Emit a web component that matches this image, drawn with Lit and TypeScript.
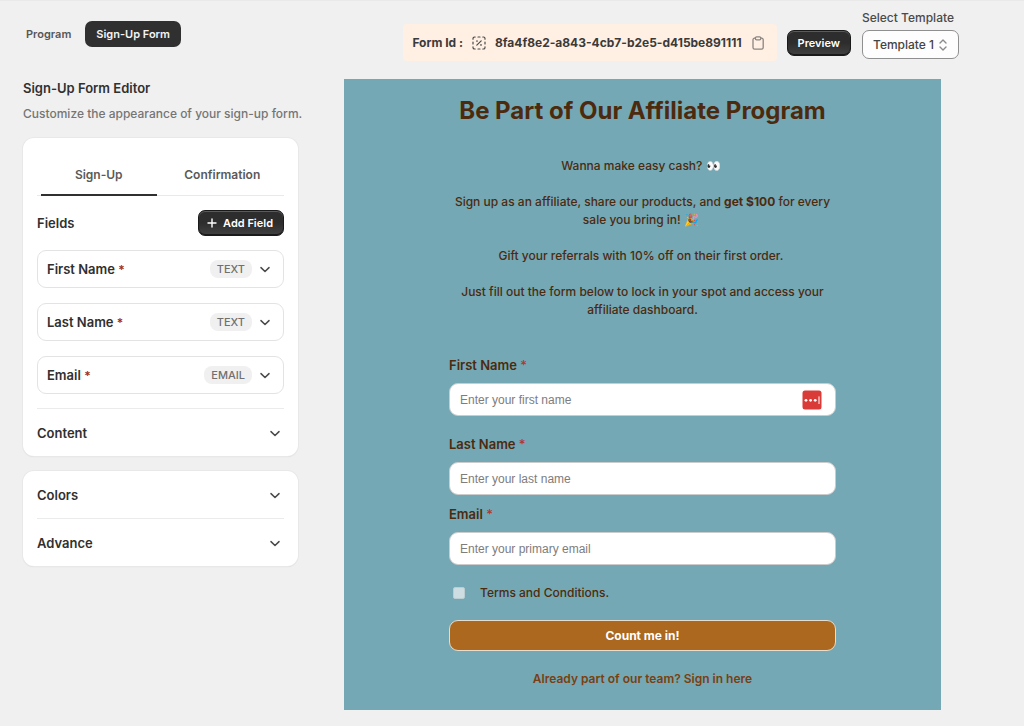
import { LitElement, html, css, svg, nothing } from "lit";
import { customElement, property, state } from "lit/decorators.js";

interface FormField {
  id: string;
  label: string;
  kind: string;
  placeholder: string;
}

const FIELDS: FormField[] = [
  { id: "first-name", label: "First Name", kind: "TEXT", placeholder: "Enter your first name" },
  { id: "last-name", label: "Last Name", kind: "TEXT", placeholder: "Enter your last name" },
  { id: "email", label: "Email", kind: "EMAIL", placeholder: "Enter your primary email" },
];

const chevron = html`<svg class="chevron" viewBox="0 0 12 12" width="12" height="12" aria-hidden="true">
  ${svg`<path d="M2 4.6 L6 8.5 L10 4.6" fill="none" stroke="#4a4a4a" stroke-width="1.5" stroke-linecap="round" stroke-linejoin="round"/>`}
</svg>`;

const base = css`
  :host,
  * {
    box-sizing: border-box;
  }
  button,
  select {
    font: inherit;
    color: inherit;
    margin: 0;
    cursor: pointer;
  }
  h1,
  h2,
  h3,
  p,
  ul {
    margin: 0;
    padding: 0;
  }
  .dark-button {
    display: flex;
    align-items: center;
    justify-content: center;
    gap: 6px;
    height: 26px;
    padding: 0 10px;
    border: 1px solid #1a1a1a;
    border-radius: 7px;
    background: linear-gradient(#2d2d2d 50%, #414141);
    box-shadow: inset 0 1px 0 #5a5a5a, inset 0 -1px 0 #1a1a1a;
    color: #fff;
    font-size: 11px;
    font-weight: 600;
    line-height: 16px;
  }
  .dark-button.with-icon {
    padding-left: 8px;
  }
`;

@customElement("top-bar")
export class TopBar extends LitElement {
  static styles = [
    base,
    css`
      :host {
        display: flex;
        justify-content: space-between;
        align-items: flex-start;
        padding: 9px 65px 0 15px;
        min-height: 79px;
        border-top: 1px solid #e9e9e9;
      }
      .tabs {
        display: flex;
        gap: 3px;
        padding-top: 11px;
      }
      .tab {
        height: 26px;
        padding: 0 11px;
        border: 0;
        border-radius: 7px;
        background: none;
        color: #575757;
        font-size: 11px;
        font-weight: 600;
        line-height: 16px;
      }
      .tab.active {
        background: #303030;
        color: #f4f4f4;
      }
      .right {
        display: flex;
        align-items: flex-start;
        gap: 11px;
      }
      .actions {
        display: flex;
        align-items: center;
        gap: 10px;
        padding-top: 14px;
      }
      .form-id {
        display: flex;
        align-items: center;
        height: 37px;
        padding: 0 12px 0 9px;
        border-radius: 4px;
        background: #fff0e3;
        color: #3a3a3a;
        font-size: 12px;
        font-weight: 700;
        gap: 9px;
      }
      .form-id svg {
        flex: none;
      }
      .copy {
        display: flex;
        padding: 0;
        border: 0;
        background: none;
      }
      .picker {
        display: grid;
        gap: 5px;
      }
      .picker label {
        color: #4a4a4a;
        font-size: 12px;
        font-weight: 500;
        line-height: 15px;
      }
      .select-box {
        display: grid;
        align-items: center;
      }
      .select-box > * {
        grid-area: 1 / 1;
      }
      .select-box select {
        appearance: none;
        width: 97px;
        height: 29px;
        padding: 0 10px;
        border: 1px solid #8f8f8f;
        border-radius: 7px;
        background: #fdfdfd;
        color: #444;
        font-size: 12px;
        font-weight: 500;
      }
      .select-box svg {
        justify-self: end;
        margin-right: 11px;
        pointer-events: none;
      }
    `,
  ];

  render() {
    return html`
      <nav class="tabs" aria-label="Sections">
        <button class="tab">Program</button>
        <button class="tab active" aria-current="page">Sign-Up Form</button>
      </nav>
      <div class="right">
        <div class="actions">
          <div class="form-id">
            <span>Form Id :</span>
            <svg viewBox="0 0 14 14" width="14" height="14" fill="none" stroke="#4a4a4a" stroke-width="1.2" stroke-linecap="round" aria-hidden="true">
              <path d="M1 3.2V2.6C1 1.7 1.7 1 2.6 1H3.2 M10.8 1H11.4C12.3 1 13 1.7 13 2.6V3.2 M13 10.8V11.4C13 12.3 12.3 13 11.4 13H10.8 M3.2 13H2.6C1.7 13 1 12.3 1 11.4V10.8" />
              <path d="M6 1H8 M6 13H8 M1 6V8 M13 6V8" />
              <path d="M4.8 9.2L9.2 4.8" />
              <circle cx="5" cy="5.1" r="0.3" />
              <circle cx="9" cy="8.9" r="0.3" />
            </svg>
            <span>8fa4f8e2-a843-4cb7-b2e5-d415be891111</span>
            <button class="copy" aria-label="Copy form id">
              <svg viewBox="0 0 14 14" width="14" height="14" fill="none" stroke="#8a8580" stroke-width="1.3" stroke-linejoin="round">
                <path d="M4.4 2.2H3.6C2.7 2.2 2 2.9 2 3.8V11.6C2 12.5 2.7 13.2 3.6 13.2H10.6C11.5 13.2 12.2 12.5 12.2 11.6V3.8C12.2 2.9 11.5 2.2 10.6 2.2H9.8" />
                <path d="M5.6 0.9H8.6C9.3 0.9 9.8 1.4 9.8 2.1V2.6C9.8 3.3 9.3 3.8 8.6 3.8H5.6C4.9 3.8 4.4 3.3 4.4 2.6V2.1C4.4 1.4 4.9 0.9 5.6 0.9Z" />
              </svg>
            </button>
          </div>
          <button class="dark-button">Preview</button>
        </div>
        <div class="picker">
          <label for="template">Select Template</label>
          <div class="select-box">
            <select id="template">
              <option>Template 1</option>
              <option>Template 2</option>
            </select>
            <svg viewBox="0 0 10 14" width="10" height="14" fill="none" stroke="#8a8a8a" stroke-width="1.4" stroke-linecap="round" stroke-linejoin="round" aria-hidden="true">
              <path d="M2 4.9L5 2L8 4.9 M2 9.1L5 12L8 9.1" />
            </svg>
          </div>
        </div>
      </div>
    `;
  }
}

@customElement("form-editor")
export class FormEditor extends LitElement {
  @state() private tab = 0;

  static styles = [
    base,
    css`
      :host {
        display: block;
        color: #303030;
      }
      .title {
        font-size: 13px;
        font-weight: 600;
        line-height: 18px;
      }
      .hint {
        margin-top: 8px;
        color: #757575;
        font-size: 12px;
        font-weight: 500;
        line-height: 18px;
        white-space: nowrap;
      }
      .card {
        padding: 0 14px;
        border-radius: 11px;
        background: #fff;
        box-shadow: 0 0 0 1px #e8e8e8, 0 1px 1px 0 #d2d2d2;
      }
      .card + .card {
        margin-top: 15px;
      }
      .first {
        margin-top: 15px;
        padding-top: 16px;
      }
      .tabs {
        display: flex;
        gap: 8px;
        padding: 0 4px;
        border-bottom: 1px solid #e9e9e9;
      }
      .tab {
        flex: 1;
        height: 42px;
        padding: 0;
        border: 0;
        border-bottom: 2px solid transparent;
        margin-bottom: -1px;
        background: none;
        color: #5a5a5a;
        font-size: 12px;
        font-weight: 600;
      }
      .tab.active {
        border-bottom-color: #303030;
      }
      .head {
        display: flex;
        justify-content: space-between;
        align-items: center;
        padding: 14px 0;
      }
      .name {
        font-size: 13px;
        font-weight: 600;
        line-height: 18px;
      }
      .list {
        display: grid;
        gap: 15px;
        padding-bottom: 14px;
        border-bottom: 1px solid #ebebeb;
        list-style: none;
      }
      .field {
        display: flex;
        align-items: center;
        width: 100%;
        height: 38px;
        padding: 0 12px 0 9px;
        border: 1px solid #e3e3e3;
        border-radius: 9px;
        background: #fff;
        text-align: left;
      }
      .field .name {
        flex: 1;
      }
      .star {
        color: #a52a20;
        font-size: 12px;
      }
      .kind {
        padding: 0 7px;
        margin-right: 7px;
        border-radius: 8px;
        background: #f0f0f0;
        color: #707070;
        font-size: 11px;
        font-weight: 500;
        line-height: 18px;
      }
      .section {
        display: flex;
        justify-content: space-between;
        align-items: center;
        width: 100%;
        height: 47px;
        padding: 0 3px 0 0;
        border: 0;
        background: none;
        text-align: left;
      }
      .section + .section {
        border-top: 1px solid #ebebeb;
        height: 48px;
      }
    `,
  ];

  render() {
    const section = (name: string) =>
      html`<button class="section" aria-expanded="false"><span class="name">${name}</span>${chevron}</button>`;
    return html`
      <h2 class="title">Sign-Up Form Editor</h2>
      <p class="hint">Customize the appearance of your sign-up form.</p>
      <section class="card first">
        <div class="tabs" role="tablist">
          ${["Sign-Up", "Confirmation"].map(
            (name, i) => html`<button
              class="tab ${i === this.tab ? "active" : ""}"
              role="tab"
              aria-selected=${i === this.tab}
              @click=${() => (this.tab = i)}
            >${name}</button>`
          )}
        </div>
        <div class="head">
          <h3 class="name">Fields</h3>
          <button class="dark-button with-icon">
            <svg viewBox="0 0 10 10" width="10" height="10" aria-hidden="true">
              <path d="M5 1V9M1 5H9" stroke="#fff" stroke-width="1.4" stroke-linecap="round" />
            </svg>
            Add Field
          </button>
        </div>
        <ul class="list">
          ${FIELDS.map(
            (f) => html`<li>
              <button class="field" aria-expanded="false">
                <span class="name">${f.label} <span class="star">*</span></span>
                <span class="kind">${f.kind}</span>
                ${chevron}
              </button>
            </li>`
          )}
        </ul>
        ${section("Content")}
      </section>
      <section class="card">${section("Colors")}${section("Advance")}</section>
    `;
  }
}

@customElement("form-preview")
export class FormPreview extends LitElement {
  @property({ attribute: false }) fields: FormField[] = FIELDS;

  static styles = [
    base,
    css`
      :host {
        display: block;
        padding: 16px 105px 22px;
        background: #74a8b5;
        color: #4d2a0e;
      }
      .heading {
        font-size: 24px;
        font-weight: 700;
        line-height: 32px;
        text-align: center;
      }
      .intro {
        display: grid;
        gap: 18px;
        padding: 30px 0 37px;
        font-size: 12px;
        font-weight: 500;
        line-height: 18px;
        text-align: center;
      }
      form {
        display: flex;
        flex-direction: column;
      }
      .row {
        display: grid;
        gap: 9px;
        padding-bottom: 10px;
      }
      .row.first {
        padding-bottom: 19px;
      }
      .row label {
        font-size: 13px;
        font-weight: 600;
        line-height: 18px;
      }
      .star {
        color: #b0382c;
        font-weight: 500;
      }
      .box {
        display: flex;
        align-items: center;
        height: 33px;
        padding: 0 13px 0 10px;
        border: 1px solid #ccc;
        border-radius: 9px;
        background: #fff;
      }
      .box input {
        flex: 1;
        min-width: 0;
        height: 31px;
        padding: 0;
        border: 0;
        outline: 0;
        background: none;
        font: 12px "Liberation Sans", Arial, sans-serif;
      }
      .box input::placeholder {
        color: #7d7d7d;
      }
      .terms {
        display: flex;
        align-items: center;
        gap: 15px;
        padding: 9px 4px 18px;
        font-size: 12px;
        font-weight: 500;
        line-height: 18px;
      }
      .terms input {
        appearance: none;
        width: 12px;
        height: 12px;
        margin: 0;
        border: 1px solid #b9cdd3;
        border-radius: 2px;
        background: #cddde2;
      }
      .submit {
        height: 31px;
        border: 1px solid #e6dccd;
        border-radius: 9px;
        background: #ab681e;
        color: #fff;
        font-size: 12px;
        font-weight: 700;
      }
      .signin {
        display: block;
        margin-top: 19px;
        color: #7a3f10;
        font-size: 12px;
        font-weight: 600;
        line-height: 18px;
        text-align: center;
        text-decoration: none;
      }
    `,
  ];

  render() {
    return html`
      <h1 class="heading">Be Part of Our Affiliate Program</h1>
      <div class="intro">
        <p>Wanna make easy cash? 👀&nbsp;</p>
        <p>Sign up as an affiliate, share our products, and <b>get $100</b> for every sale you bring in! 🎉&nbsp;</p>
        <p>Gift your referrals with 10% off on their first order.&nbsp;</p>
        <p>Just fill out the form below to lock in your spot and access your affiliate dashboard.</p>
      </div>
      <form @submit=${(e: Event) => e.preventDefault()}>
        ${this.fields.map(
          (f, i) => html`<div class="row ${i === 0 ? "first" : ""}">
            <label for=${f.id}>${f.label} <span class="star">*</span></label>
            <div class="box">
              <input id=${f.id} type=${f.kind === "EMAIL" ? "email" : "text"} placeholder=${f.placeholder} />
              ${i === 0
                ? html`<svg viewBox="0 0 20 20" width="20" height="20" aria-hidden="true">
                    <rect x="0.5" y="0.5" width="19" height="19" rx="2.5" fill="#d83b38" />
                    <circle cx="4" cy="10.3" r="1.4" fill="#fff" />
                    <circle cx="8.6" cy="10.3" r="1.4" fill="#fff" />
                    <circle cx="13.2" cy="10.3" r="1.4" fill="#fff" />
                    <rect x="16.5" y="6.4" width="1" height="7.6" fill="#fff" />
                  </svg>`
                : nothing}
            </div>
          </div>`
        )}
        <div class="terms">
          <input id="terms" type="checkbox" />
          <label for="terms">Terms and Conditions.</label>
        </div>
        <button class="submit">Count me in!</button>
      </form>
      <a class="signin" href="#signin">Already part of our team? Sign in here</a>
    `;
  }
}

@customElement("app-root")
export class AppRoot extends LitElement {
  static styles = css`
    :host {
      display: block;
      min-height: 100vh;
      background: #f0f0f0;
      font-family: Inter, "Noto Sans", sans-serif;
    }
    .main {
      display: grid;
      grid-template-columns: minmax(0, 275fr) minmax(0, 597fr);
      gap: 46px;
      align-items: start;
      padding: 0 83px 16px 23px;
    }
  `;

  render() {
    return html`
      <top-bar></top-bar>
      <main class="main">
        <form-editor></form-editor>
        <form-preview></form-preview>
      </main>
    `;
  }
}
